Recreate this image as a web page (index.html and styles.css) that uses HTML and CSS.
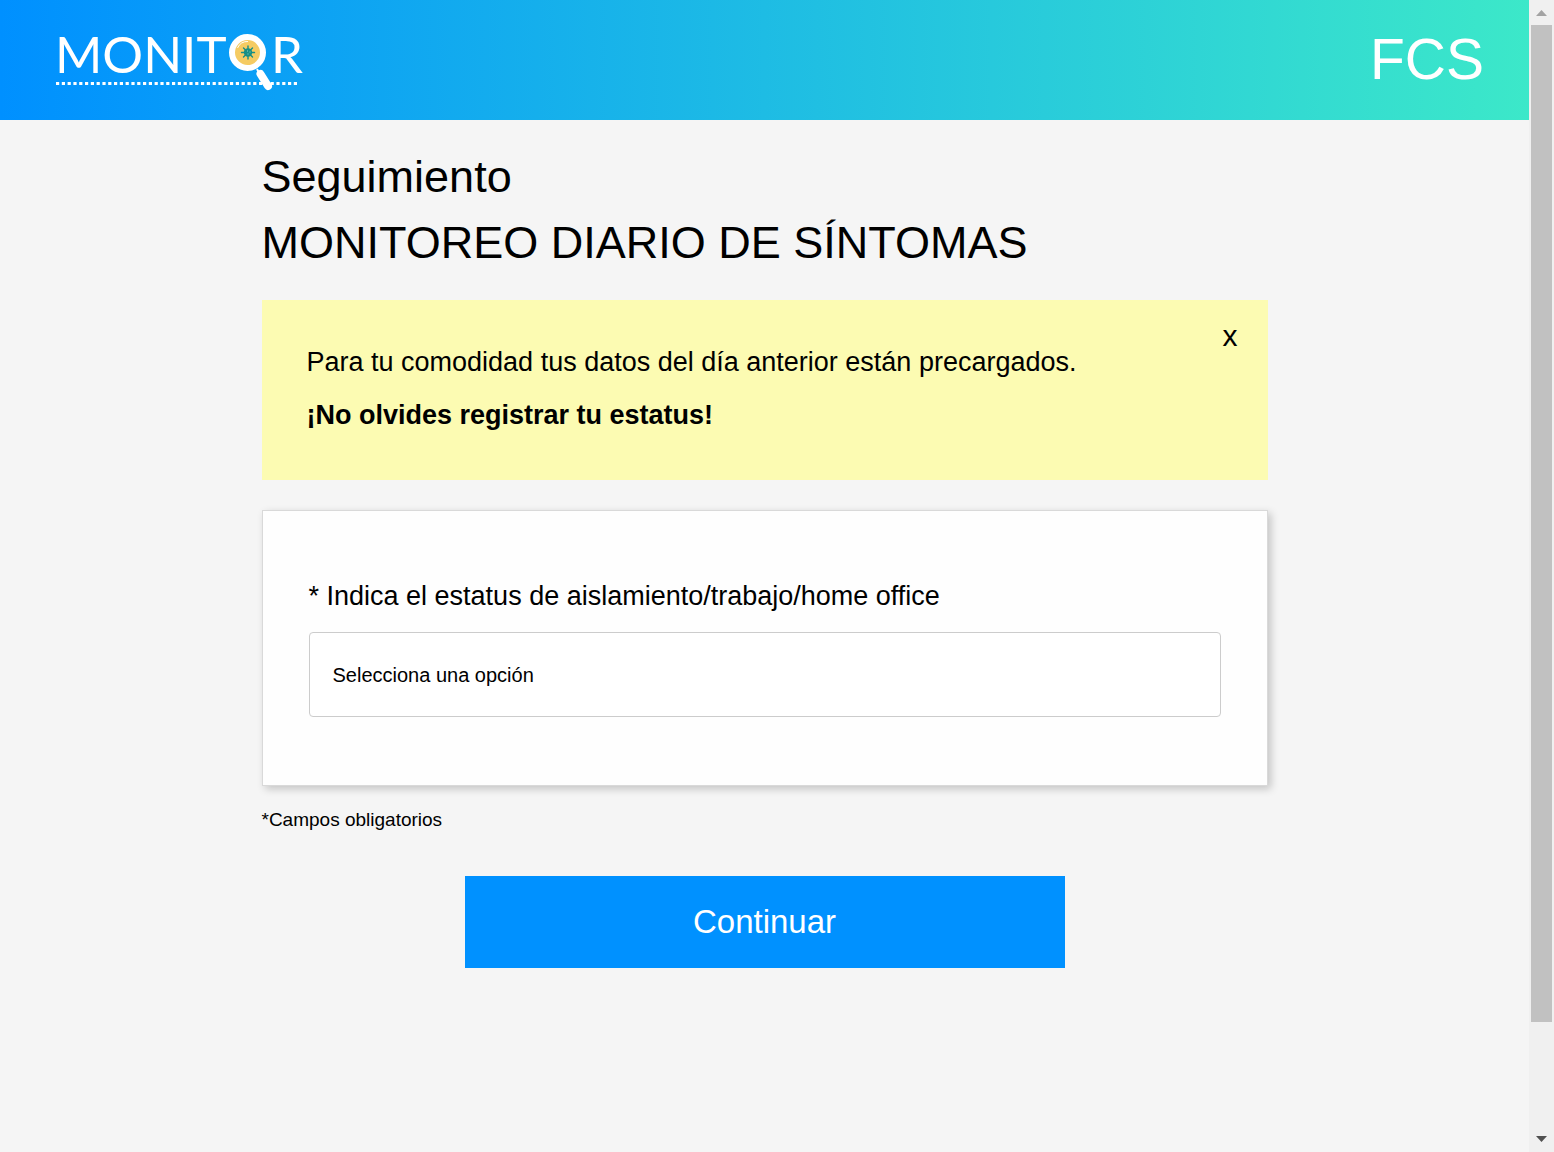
FILE: index.html
```html
<!DOCTYPE html>
<html lang="es">
<head>
<meta charset="utf-8">
<meta name="viewport" content="width=device-width, initial-scale=1">
<title>Monitoreo diario de síntomas</title>
<link rel="stylesheet" href="styles.css">
</head>
<body>
<div class="page">
  <header class="topbar">
    <a class="logo" href="#">
      <svg width="264" height="80" viewBox="-8 -10 264 80" role="img" aria-label="Monitor">
        <g class="logo-text">
          <text x="-1" y="43">MONIT</text>
          <text x="215" y="43">R</text>
        </g>
        <path d="M0 53.500H243" stroke="#fff" stroke-width="3" stroke-dasharray="3.200 2.600" fill="none"/>
        <path d="M201 39L205 47" stroke="#fff" stroke-width="2"/>
        <path d="M204.500 44L212 56" stroke="#fff" stroke-width="8" stroke-linecap="round"/>
        <circle cx="191.500" cy="22.500" r="15.500" fill="#f5cb62" stroke="#fff" stroke-width="6"/>
        <path d="M181.500 18A11 11 0 0 1 192 11.500" stroke="#fff" stroke-width="1" fill="none"/>
        <g stroke="#168e86" stroke-width="1.400" stroke-linecap="round">
          <path d="M192 16V29M185.500 22.500H198.500M187.500 18L196.500 27M196.500 18L187.500 27"/>
          <circle cx="192" cy="22.500" r="3.500" fill="#168e86"/>
        </g>
        <path d="M191 21h1M193.500 22h1M191.500 24h1" stroke="#8fd8c4" stroke-width="1"/>
      </svg>
    </a>
    <span class="org">FCS</span>
  </header>
  <main class="content">
    <h1 class="title">Seguimiento</h1>
    <h2 class="title">MONITOREO DIARIO DE SÍNTOMAS</h2>
    <section class="notice">
      <div class="notice-text">
        <p>Para tu comodidad tus datos del día anterior están precargados.</p>
        <p><strong>¡No olvides registrar tu estatus!</strong></p>
      </div>
      <button class="notice-close" type="button">x</button>
    </section>
    <form class="form">
      <div class="card">
        <label class="label" for="estatus">* Indica el estatus de aislamiento/trabajo/home office</label>
        <select class="select" id="estatus" required>
          <option value="">Selecciona una opción</option>
        </select>
      </div>
      <p class="hint">*Campos obligatorios</p>
      <button class="submit" type="button">Continuar</button>
    </form>
  </main>
</div>
<div class="scrollbar" aria-hidden="true">
  <svg class="arrow" width="11" height="6" viewBox="0 0 11 6"><path d="M0 6L5.500 0L11 6Z" fill="#a3a3a3"/></svg>
  <div class="track"><div class="thumb"></div></div>
  <svg class="arrow" width="11" height="6" viewBox="0 0 11 6"><path d="M0 0L5.500 6L11 0Z" fill="#505050"/></svg>
</div>
</body>
</html>
```
FILE: styles.css
```css
* {
  box-sizing: border-box;
}

body {
  display: flex;
  align-items: flex-start;
  margin: 0;
  background: #f5f5f5;
  color: #000;
  font-family: Arial, "Liberation Sans", sans-serif;
}

.page {
  flex: 1;
  min-width: 0;
}

.topbar {
  display: flex;
  align-items: flex-start;
  justify-content: space-between;
  height: 120px;
  padding: 20px 45px 0 48px;
  background: linear-gradient(to right, #0090ff, #3ce8c9);
  color: #fff;
}

.logo svg {
  display: block;
}

.logo-text {
  font-family: Lato, sans-serif;
  font-size: 51px;
  fill: #fff;
}

.org {
  font-size: 57px;
  line-height: 78px;
}

.content {
  max-width: 1050px;
  margin: 0 auto;
  padding: 24px 22px;
}

.title {
  margin: 0;
  font-size: 45px;
  font-weight: 400;
  line-height: 66px;
}

.notice {
  display: flex;
  align-items: flex-start;
  justify-content: space-between;
  min-height: 180px;
  margin-top: 24px;
  padding: 20px 30px 20px 45px;
  background: #fcfbb2;
  font-size: 27px;
}

.notice-text {
  padding-top: 16px;
}

.notice p {
  margin: 0;
  line-height: 53px;
}

.notice-close {
  padding: 0;
  border: 0;
  background: none;
  color: inherit;
  font: 30px/32px Arial, "Liberation Sans", sans-serif;
}

.form {
  display: flex;
  flex-direction: column;
  margin-top: 30px;
}

.card {
  display: flex;
  flex-direction: column;
  gap: 16px;
  padding: 65px 46px 68px;
  border: 1px solid #d9d9d9;
  background: #fefefe;
  box-shadow: 3px 3px 8px rgba(0, 0, 0, 0.2);
}

.label {
  font-size: 27px;
  line-height: 40px;
}

.select {
  width: 100%;
  height: 85px;
  padding: 0 23px;
  border: 1px solid #ccc;
  border-radius: 4px;
  appearance: none;
  background: #fff;
  color: #000;
  font: 20px Arial, "Liberation Sans", sans-serif;
}

.hint {
  margin: 20px 0 42px;
  font-size: 19px;
  line-height: 28px;
}

.submit {
  align-self: center;
  width: 100%;
  max-width: 600px;
  height: 92px;
  border: 0;
  background: #0091ff;
  color: #fff;
  font: 33px Arial, "Liberation Sans", sans-serif;
}

.scrollbar {
  position: sticky;
  top: 0;
  display: flex;
  flex-direction: column;
  align-items: center;
  width: 25px;
  height: 100vh;
  padding: 10px 2px;
  background: #f0f0f0;
}

.track {
  flex: 1;
  align-self: stretch;
  margin: 9px 0;
}

.thumb {
  height: 90.5%;
  background: #c1c1c1;
}
```
